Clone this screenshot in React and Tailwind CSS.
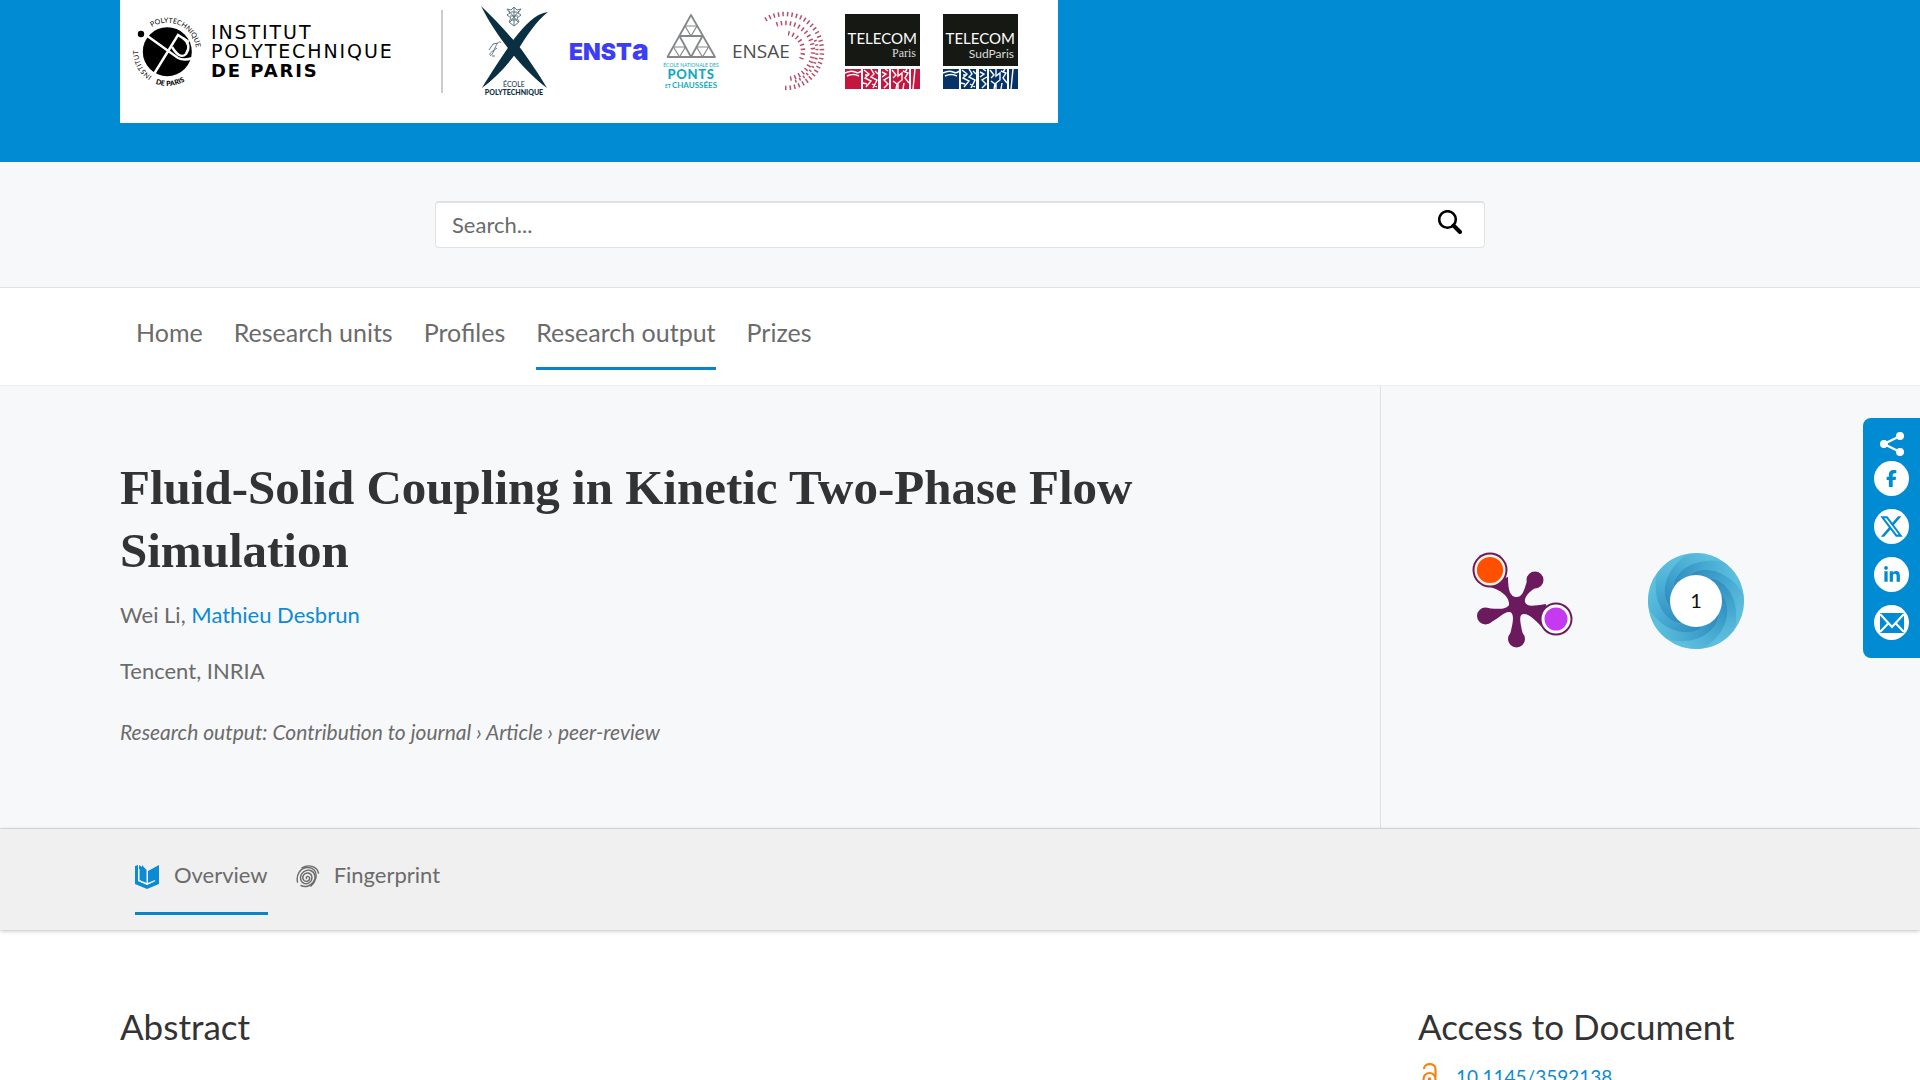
import React, { useState } from 'react';
import { FaFacebookF, FaLinkedinIn, FaXTwitter } from 'react-icons/fa6';

const navItems = ['Home', 'Research units', 'Profiles', 'Research output', 'Prizes'];

// point on a circle, angle in degrees
const polar = (cx, cy, r, deg) => {
  const a = (deg * Math.PI) / 180;
  return `${(cx + r * Math.cos(a)).toFixed(2)} ${(cy + r * Math.sin(a)).toFixed(2)}`;
};

const arc = (cx, cy, r, from, to) =>
  `M${polar(cx, cy, r, from)} A${r} ${r} 0 ${to - from > 180 ? 1 : 0} 1 ${polar(cx, cy, r, to)}`;

const TelecomLogo = ({ x, color, children }) => (
  <g transform={`translate(${x} 0)`}>
    <rect x="0" y="14" width="75" height="52" fill="#161814" />
    <text x="72" y="44" textAnchor="end" fontSize="15" fill="#fff" className="font-['Lato',sans-serif]">TELECOM</text>
    {children}
    <g fill={color}>
      <rect x="0" y="69" width="16" height="20" />
      <rect x="18" y="69" width="15" height="20" />
      <rect x="36" y="69" width="8" height="20" />
      <rect x="46" y="69" width="18" height="20" />
      <rect x="66" y="69" width="9" height="20" />
    </g>
    <g fill="none" stroke="#fff" strokeWidth="1.4">
      <path d="M0 73 Q6 70 10 72 T16 71 M2 76 Q8 73 14 76" />
      <path d="M19 70l5 4-4 4 6 3-5 6M26 69l3 5-3 3 6 3-4 8M20 75h4M27 84l5 3M30 71l3 3M18 83l4 1" />
      <path d="M37 72l4 2-4 3M44 77l-5 3 4 4-4 4M40 69l3 2" />
      <path d="M47 70l4 5-3 3M53 69v7l4-3v7l-4 3v6M58 71l5 2-3 5 4 5M48 81l4 3-1 5M59 83l-1 6M62 69l-2 3" />
      <path d="M68 89l2-20" />
    </g>
  </g>
);

const PartnerLogos = () => (
  <svg width="938" height="123" viewBox="0 0 938 123" role="img" aria-label="Institut Polytechnique de Paris and member schools" className="bg-white">
    {/* Institut Polytechnique de Paris */}
    <defs>
      <path id="seal-top" d={arc(47.3, 51.7, 29, -122, 20)} />
      <path id="seal-left" d={arc(47.3, 51.7, 29, 122, 212)} />
      <path id="seal-bottom" d="M35.5 83.8 A34 34 0 0 0 81 57" />
    </defs>
    <circle cx="47.3" cy="51.7" r="24.5" />
    <circle cx="21" cy="34" r="3.2" />
    <g fill="none" stroke="#fff" strokeWidth="2.4">
      <path d="M26 35 L58 58 Q64 61 73 58" />
      <path d="M34 74 L58 35 L69 42" />
      <path d="M52 47 Q60 60 66 54 Q72 45 63 38" />
    </g>
    <g fontSize="7" className="font-['Lato',sans-serif]">
      <text><textPath href="#seal-top">POLYTECHNIQUE</textPath></text>
      <text><textPath href="#seal-left">INSTITUT</textPath></text>
      <text className="font-black"><textPath href="#seal-bottom">DE PARIS</textPath></text>
    </g>
    <g fontSize="19" className="font-['DejaVu_Sans',sans-serif] tracking-widest">
      <text x="91" y="39">INSTITUT</text>
      <text x="91" y="58">POLYTECHNIQUE</text>
      <text x="91" y="77" fontWeight="bold" fontSize="18">DE PARIS</text>
    </g>
    <path d="M322 10V93" stroke="#999" />

    {/* École Polytechnique */}
    <g fill="#0b2f42">
      <path d="M361 6 C374 18 388 34 398 45 C408 58 420 76 427 88 C416 80 402 66 391 52 C380 38 370 24 361 6Z" />
      <path d="M428 12 C416 13 404 26 394 39 C383 55 371 73 362 88 C374 79 386 67 396 53 C406 37 416 21 428 12Z" />
    </g>
    <g fill="none" stroke="#5c7683" strokeWidth="1">
      <path d="M387 9l3 4-3 2 4 3-2 4 5 4 5-4-2-4 4-3-3-2 3-4-4 1-3-3-3 3zM391 12h6M390 16h8M391 20h6M394 8v18M389 11l9 11M399 11l-9 11" />
      <path d="M381 43c-1-3-4 0-6 5s-4 9-5 7 3-4 7-7M369 50l4-6 5-1M372 56h3" />
    </g>
    <g textAnchor="middle" fill="#0b2f42" className="font-['Lato',sans-serif]">
      <text x="394" y="87" fontSize="7">ÉCOLE</text>
      <text x="394" y="95" fontSize="7" fontWeight="900">POLYTECHNIQUE</text>
    </g>

    {/* ENSTA */}
    <text x="449" y="60" fontSize="23" fontWeight="900" fill="#3d3df5" className="font-['Inter',sans-serif]">
      ENST<tspan fontSize="28">a</tspan>
    </text>

    {/* Ponts et Chaussées */}
    <g fill="none" stroke="#858789" strokeWidth="1.8" strokeLinejoin="round">
      <path d="M571 15 L547.500 57 H595Z M559.5 36 H582.5 L571 57Z" />
      <path strokeWidth="1.2" d="M565 26h12l-6 10zM553.500 47h12l-6 10zM576.500 47h12l-6 10z" />
    </g>
    <g textAnchor="middle" fill="#14a9c4" className="font-['Lato',sans-serif]">
      <text x="571" y="67" fontSize="5">ÉCOLE NATIONALE DES</text>
      <text x="571" y="79" fontSize="13" fontWeight="900" className="tracking-wider">PONTS</text>
      <text x="571" y="88" fontSize="8" fontWeight="bold"><tspan fontSize="5">ET </tspan>CHAUSSÉES</text>
    </g>

    {/* ENSAE */}
    <text x="612" y="58" fontSize="19" fill="#4d4d4f" className="font-['Open_Sans',sans-serif]">ENSAE</text>
    <g fill="none" stroke="#b4526b" strokeWidth="4.500" strokeDasharray="1.500 3">
      <path d={arc(665, 51, 37, -122, 94)} />
      <path d={arc(665, 51, 28, -108, 80)} />
      <path d={arc(665, 51, 18, -80, 28)} />
      <path d={arc(665, 51, 32, -20, 74)} strokeWidth="3" />
    </g>

    <TelecomLogo x={725} color="#c4163f">
      <text x="71" y="57" textAnchor="end" fontSize="12" fill="#ddd" className="font-['Liberation_Serif',serif]">Paris</text>
    </TelecomLogo>
    <TelecomLogo x={823} color="#063468">
      <text x="71" y="58" textAnchor="end" fontSize="12" fill="#ddd" className="font-['Lato',sans-serif]">SudParis</text>
    </TelecomLogo>
  </svg>
);

const SearchIcon = () => (
  <svg width="24" height="24" viewBox="0 0 24 24" fill="none" stroke="#000">
    <circle cx="9.500" cy="9.500" r="8.300" strokeWidth="2.600" />
    <path d="M15.500 15.500 L22 22" strokeWidth="4" strokeLinecap="round" />
  </svg>
);

const BookIcon = () => (
  <svg width="24" height="24" viewBox="0 0 24 24" fill="#0a8bd4">
    <path d="M0 1 L3 0 V16 L12 20 L21 16 V4 L24 1 V19 L12 24 L0 19Z" />
    <path d="M4 0 L7 2 V0 L11.500 5 V18 L4 15Z" />
    <path d="M13 6 L24 0 V16 L13 18Z" />
    <path d="M4 4 V15.500 L12 19 L20 15.500" fill="none" stroke="#f0f0f0" strokeWidth="1.200" />
  </svg>
);

const FingerprintIcon = () => (
  <svg width="24" height="24" viewBox="0 0 24 24" fill="none" stroke="#6b6b6b" strokeWidth="1.400" strokeLinecap="round">
    <path d="M10.500 13.500 c-1-2 2-3 3-1 c1 3-3 5-5.500 3 c-3-3 0-8 4-7.500 c5 1 5 7 1.500 9.500 c-4 3-9 0-9-4.500 c0-5 5-9 10-7.500 c5 2 6 8 2.500 12 c-3 4-8 5-12 3" />
    <path d="M1.500 17 C0 10 4 3 11 2.500 c6-.5 10 4 9 10 c-1 4-2 6-5 8.500" />
    <path d="M6 2.800 C12-1 21 1 22.500 8" />
  </svg>
);

// PlumX plum print: five stalks, two of them with a coloured bulb
const PlumPrint = () => (
  <svg width="104" height="96" viewBox="0 0 104 96" aria-label="PlumX metrics">
    <g fill="#6b1a5e">
      <path d="M36 25 C36 38 38 45 44.500 45 C51 45 52 38 56 26 L70 31 C58 39 52 44 53 50 C55 55 60 54 74 52 L73 78 C64 69 58 62 52 62 C46 62 48 70 52 87 H37 C41 71 43 62 38 60 C32 59 27 67 15 72 L11 56 C25 57 34 58 37 53 C38 46 30 36 9 33Z" />
      <circle cx="18" cy="18" r="17.500" />
      <circle cx="84" cy="67" r="16.500" />
      <circle cx="63" cy="28" r="8.500" />
      <circle cx="44.500" cy="87" r="8.500" />
      <circle cx="13.500" cy="64" r="8.500" />
    </g>
    <circle cx="18" cy="18" r="14.300" fill="#fe5000" stroke="#fdf3e0" strokeWidth="2.400" />
    <circle cx="84" cy="67" r="13" fill="#c53af0" stroke="#fff" strokeWidth="3" />
  </svg>
);

const DimensionsBadge = ({ count }) => (
  <svg width="98" height="98" viewBox="0 0 98 98" aria-label={`${count} citation`}>
    <defs>
      <linearGradient id="blade" gradientUnits="userSpaceOnUse" x1="46" y1="20" x2="92" y2="62">
        <stop offset="0" stopColor="#2f8dbe" />
        <stop offset="0.500" stopColor="#45a8d1" />
        <stop offset="1" stopColor="#5dbfde" />
      </linearGradient>
    </defs>
    <circle cx="49" cy="49" r="47.500" fill="#4fb4d8" />
    {[0, 1, 2, 3, 4, 5, 6, 7].map((i) => (
      <path
        key={i}
        transform={`rotate(${i * 45} 49 49)`}
        fill="url(#blade)"
        d={`M${polar(49, 49, 25, -110)} C${polar(49, 49, 38, -85)} ${polar(49, 49, 46, -45)} ${polar(49, 49, 48, -8)} A48 48 0 0 1 ${polar(49, 49, 48, 37)} C${polar(49, 49, 46, 0)} ${polar(49, 49, 38, -40)} ${polar(49, 49, 25, -65)}Z`}
      />
    ))}
    <circle cx="49" cy="49" r="26" fill="#fff" />
    <text x="49" y="56" textAnchor="middle" fontSize="20" fill="#111" className="font-['Lato',sans-serif]">{count}</text>
  </svg>
);

const ShareIcon = () => (
  <svg width="26" height="24" viewBox="0 0 26 24" fill="#fff" stroke="#fff" strokeWidth="2.400">
    <path d="M21 4 L5 12 L21 20" fill="none" />
    <circle cx="21" cy="4" r="2.800" />
    <circle cx="5" cy="12" r="2.800" />
    <circle cx="21" cy="20" r="2.800" />
  </svg>
);

const MailIcon = () => (
  <svg width="24" height="20" viewBox="0 0 24 20">
    <rect width="24" height="20" fill="#008bd2" />
    <path d="M0 1 L12 14 L24 1 M0 19 L8.500 10 M24 19 L15.500 10" fill="none" stroke="#fff" strokeWidth="2.200" />
  </svg>
);

const OpenAccessIcon = () => (
  <svg width="16" height="24" viewBox="0 0 16 24" fill="none" stroke="#f68212" strokeWidth="2.200">
    <path d="M2 6 C2 -0.500 13.500 -0.500 13.500 6 V14" />
    <circle cx="7.500" cy="16" r="6" />
    <circle cx="7.500" cy="16" r="1.800" fill="#f68212" stroke="none" />
  </svg>
);

const shareLinks = [
  { label: 'Share on Facebook', icon: <FaFacebookF size={17} /> },
  { label: 'Share on X', icon: <FaXTwitter size={25} /> },
  { label: 'Share on LinkedIn', icon: <FaLinkedinIn size={18} /> },
  { label: 'Share by email', icon: <MailIcon /> },
];

const ShareBar = () => (
  <aside className="fixed right-0 top-[418px] flex w-[57px] flex-col items-center rounded-l-lg bg-[#008bd2] pt-[14px] pb-[18px]">
    <ShareIcon />
    <div className="mt-[5px] flex flex-col gap-[13px]">
      {shareLinks.map((link) => (
        <a key={link.label} href="#" aria-label={link.label} className="flex size-[35px] items-center justify-center rounded-full bg-white text-[#008bd2]">
          {link.icon}
        </a>
      ))}
    </div>
  </aside>
);

export default function App() {
  const [query, setQuery] = useState('');

  return (
    <div className="h-screen overflow-hidden bg-white font-['Lato',sans-serif] text-[22px] leading-7 text-[#6b6b6b]">
      <header className="bg-[#008bd2] pb-[39px]">
        <div className="mx-auto max-w-[1680px]">
          <a href="#" className="flex">
            <PartnerLogos />
          </a>
        </div>
      </header>

      <form className="border-b border-[#e0e2e4] bg-[#f6f8fa] py-[39px]" onSubmit={(e) => e.preventDefault()}>
        <div className="mx-auto flex h-[47px] max-w-[1050px] overflow-hidden rounded-sm border border-t-2 border-[#e0e2e4] bg-white">
          <input
            type="text"
            aria-label="Search"
            value={query}
            onChange={(e) => setQuery(e.target.value)}
            placeholder="Search..."
            className="min-w-0 flex-1 px-4 outline-none placeholder:text-[#6b6b6b]"
          />
          <button type="submit" aria-label="Search" className="flex w-[46px] items-start pt-[7px]">
            <SearchIcon />
          </button>
        </div>
      </form>

      <nav className="border-b border-[#ebedef] pt-7 pb-[15px]">
        <ul className="mx-auto flex max-w-[1680px] gap-[31px] px-4 text-[25px] leading-8">
          {navItems.map((item) => (
            <li key={item}>
              <a
                href="#"
                className={`block border-b-3 pb-[19px] ${item === 'Research output' ? 'border-[#0a84c8]' : 'border-transparent'}`}
              >
                {item}
              </a>
            </li>
          ))}
        </ul>
      </nav>

      <section className="border-b border-[#dfe2e5] bg-[#f7f8fa]">
        <div className="mx-auto grid max-w-[1680px] grid-cols-[3fr_1fr]">
          <div className="pt-[70px] pr-[120px] pb-[82px]">
            <h1 className="font-['Liberation_Serif',serif] text-[49px] leading-[63px] font-bold text-[#333]">
              Fluid-Solid Coupling in Kinetic Two-Phase Flow Simulation
            </h1>
            <p className="mt-[19px]">
              Wei Li, <a href="#" className="text-[#0a8bd4]">Mathieu Desbrun</a>
            </p>
            <p className="mt-7">Tencent, INRIA</p>
            <p className="mt-[33px] text-[21px] italic">
              Research output: Contribution to journal › Article › peer-review
            </p>
          </div>
          <div className="flex items-start gap-[71px] border-l border-[#dfe2e5] pt-[166px] pl-[91px]">
            <PlumPrint />
            <DimensionsBadge count={1} />
          </div>
        </div>
      </section>

      <nav className="relative bg-[#f0f0f0] pt-8 pb-[15px] shadow-[0_1px_4px_rgba(0,0,0,0.25)]">
        <div className="mx-auto flex max-w-[1680px] gap-7 px-[15px]">
          <a href="#" className="flex items-end gap-[15px] border-b-3 border-[#0a84c8] pb-[23px]">
            <BookIcon />
            Overview
          </a>
          <a href="#" className="flex items-end gap-[14px] border-b-3 border-transparent pb-[23px]">
            <FingerprintIcon />
            Fingerprint
          </a>
        </div>
      </nav>

      <main className="mx-auto grid max-w-[1680px] grid-cols-[3fr_1fr] pt-[75px] text-[#333]">
        <h2 className="text-[35px] leading-[42px]">Abstract</h2>
        <section className="pl-[38px]">
          <h2 className="text-[35px] leading-[42px]">Access to Document</h2>
          <p className="mt-4 flex gap-[18px] pl-1">
            <OpenAccessIcon />
            <a href="#" className="text-[19px] text-[#0a8bd4]">10.1145/3592138</a>
          </p>
        </section>
      </main>

      <ShareBar />
    </div>
  );
}
